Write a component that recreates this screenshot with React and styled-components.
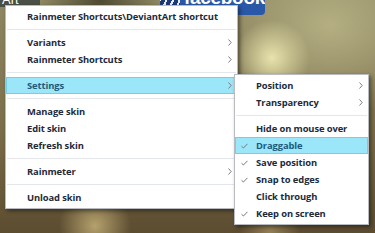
import React from "react";
import styled, { createGlobalStyle, css } from "styled-components";

const Global = createGlobalStyle`
  html, body { margin: 0; padding: 0; width: 375px; height: 233px; overflow: hidden; }
  body { font-family: "Open Sans", "Noto Sans", sans-serif; }
`;

const Desktop = styled.div`
  position: relative;
  width: 375px;
  height: 233px;
  overflow: hidden;
  background:
    radial-gradient(circle at 272px 58px, rgba(236, 232, 176, 0.95) 0, rgba(236, 232, 176, 0) 38px),
    radial-gradient(circle at 95px 226px, rgba(196, 176, 120, 0.85) 0, rgba(196, 176, 120, 0) 36px),
    radial-gradient(circle at 270px 232px, rgba(170, 150, 100, 0.7) 0, rgba(170, 150, 100, 0) 30px),
    radial-gradient(ellipse 120px 90px at 330px 25px, #b4ae82 0, rgba(180, 174, 130, 0) 100%),
    radial-gradient(ellipse 60px 40px at 100px 0px, #4e4a32 0, rgba(78, 74, 50, 0) 100%),
    linear-gradient(180deg, #8e8862 0%, #7c6e4a 55%, #5c4c30 100%);
`;

const ArtTile = styled.div`
  position: absolute;
  left: 0;
  top: -7px;
  width: 40px;
  height: 14px;
  background: #4a5046;
  color: #fff;
  font-family: "Liberation Sans", sans-serif;
  font-size: 13px;
  line-height: 13px;
  padding-left: 2px;
  box-sizing: border-box;
`;

const FbLogo = styled.div`
  position: absolute;
  left: 160px;
  top: -12px;
  width: 105px;
  height: 27px;
  display: flex;
  border-radius: 4px;
  overflow: hidden;
  background: #2a58a8;
`;

const FbStripes = styled.div`
  width: 33px;
  background: repeating-linear-gradient(115deg, #1c3a78 0 4px, #e8eef8 4px 6px);
`;

const FbText = styled.div`
  flex: 1;
  color: #fff;
  font-family: "Liberation Sans", sans-serif;
  font-weight: 700;
  font-size: 19px;
  line-height: 19px;
  padding-left: 4px;
  letter-spacing: -0.3px;
`;

const Menu = styled.ul`
  position: absolute;
  left: ${(p) => p.$x}px;
  top: ${(p) => p.$y}px;
  width: ${(p) => p.$w}px;
  margin: 0;
  padding: 2px 0;
  list-style: none;
  background: #fff;
  border: 1px solid #b8bcc0;
  box-sizing: border-box;
  box-shadow: 2px 2px 4px rgba(0, 0, 0, 0.45);
`;

const Item = styled.li`
  height: 17px;
  display: grid;
  grid-template-columns: 20px 1fr 8px;
  align-items: center;
  border: 1px solid transparent;
  box-sizing: border-box;
  font-size: 9.4px;
  font-weight: 700;
  letter-spacing: -0.1px;
  color: #1c2a3a;
  white-space: nowrap;
  ${(p) =>
    p.$active &&
    css`
      background: #9be6f8;
      border-color: #72cfe9;
      color: #1e5a7c;
    `}
`;

const Label = styled.span`
  line-height: 15px;
`;

const Sep = styled.li`
  height: 9px;
  display: flex;
  align-items: center;
  margin: 0 1px;
  &::after {
    content: "";
    flex: 1;
    height: 1px;
    background: #e3e7eb;
  }
`;

const Check = () => (
  <svg width="7" height="6" viewBox="0 0 7 6" style={{ marginLeft: 5 }}>
    <polyline points="0.5,3.2 2.4,5 6.5,0.8" fill="none" stroke="#6f7b82" strokeWidth="1" />
  </svg>
);

const Chevron = () => (
  <svg width="4" height="7" viewBox="0 0 4 7">
    <polyline points="0.5,0.5 3.2,3.5 0.5,6.5" fill="none" stroke="#7c7c7c" strokeWidth="1" />
  </svg>
);

const Row = ({ label, sub, checked, active }) => (
  <Item $active={active}>
    <span>{checked ? <Check /> : null}</span>
    <Label>{label}</Label>
    <span>{sub ? <Chevron /> : null}</span>
  </Item>
);

const mainItems = [
  { label: "Rainmeter Shortcuts\\DeviantArt shortcut" },
  "sep",
  { label: "Variants", sub: true },
  { label: "Rainmeter Shortcuts", sub: true },
  "sep",
  { label: "Settings", sub: true, active: true },
  "sep",
  { label: "Manage skin" },
  { label: "Edit skin" },
  { label: "Refresh skin" },
  "sep",
  { label: "Rainmeter", sub: true },
  "sep",
  { label: "Unload skin" },
];

const subItems = [
  { label: "Position", sub: true },
  { label: "Transparency", sub: true },
  "sep",
  { label: "Hide on mouse over" },
  { label: "Draggable", checked: true, active: true },
  { label: "Save position", checked: true },
  { label: "Snap to edges", checked: true },
  { label: "Click through" },
  { label: "Keep on screen", checked: true },
];

const renderItems = (items) =>
  items.map((it, i) => (it === "sep" ? <Sep key={i} /> : <Row key={i} {...it} />));

export default function App() {
  return (
    <>
      <Global />
      <Desktop>
        <ArtTile>Art</ArtTile>
        <FbLogo>
          <FbStripes />
          <FbText>facebook</FbText>
        </FbLogo>
        <Menu $x={5} $y={5} $w={233}>
          {renderItems(mainItems)}
        </Menu>
        <Menu $x={234} $y={74} $w={135}>
          {renderItems(subItems)}
        </Menu>
      </Desktop>
    </>
  );
}
